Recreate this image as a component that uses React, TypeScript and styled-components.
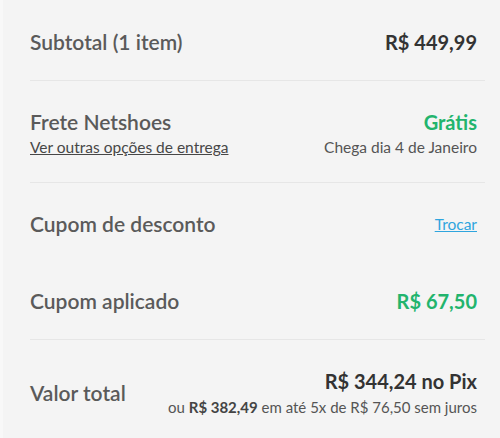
import React from "react";
import styled, { createGlobalStyle } from "styled-components";

const Global = createGlobalStyle`
  html, body { margin: 0; padding: 0; background: #f4f4f4; }
  body { font-family: "Lato", "Noto Sans", sans-serif; -webkit-font-smoothing: antialiased; }
`;

const Card = styled.div`
  width: 500px;
  height: 438px;
  box-sizing: border-box;
  background: #f4f4f4;
  border-left: 3px solid #f8f8f8;
  padding: 0 15px 0 27px;
`;

const Section = styled.section<{ $pt: number; $pb: number; $gap?: number; $last?: boolean }>`
  display: flex;
  flex-direction: column;
  gap: ${(p) => p.$gap ?? 0}px;
  padding: ${(p) => p.$pt}px 8px ${(p) => p.$pb}px 0;
  border-bottom: ${(p) => (p.$last ? "none" : "1px solid #e6e6e6")};
`;

const Row = styled.div`
  display: flex;
  justify-content: space-between;
  align-items: center;
`;

const Col = styled.div<{ $end?: boolean; $gap?: number }>`
  display: flex;
  flex-direction: column;
  align-items: ${(p) => (p.$end ? "flex-end" : "flex-start")};
  gap: ${(p) => p.$gap ?? 0}px;
`;

const Label = styled.span`
  font-size: 21px;
  line-height: 24px;
  font-weight: 600;
  color: #5a5a5a;
`;

const Price = styled.span<{ $green?: boolean }>`
  font-size: 20px;
  line-height: 24px;
  font-weight: 700;
  color: ${(p) => (p.$green ? "#22b46d" : "#333333")};
`;

const SmallLink = styled.a`
  font-size: 15.5px;
  line-height: 18px;
  color: #474747;
  text-decoration: underline;
  cursor: pointer;
`;

const SmallText = styled.span`
  font-size: 15.5px;
  line-height: 18px;
  color: #555555;
`;

const BlueLink = styled.a`
  font-size: 15.5px;
  line-height: 24px;
  color: #2fa5de;
  text-decoration: underline;
  cursor: pointer;
`;

const Installments = styled.span`
  font-size: 15px;
  line-height: 18px;
  color: #555555;
  b { font-weight: 700; color: #444444; }
`;

export default function App() {
  return (
    <>
      <Global />
      <Card>
        <Section $pt={30} $pb={26}>
          <Row>
            <Label>Subtotal (1 item)</Label>
            <Price>R$ 449,99</Price>
          </Row>
        </Section>
        <Section $pt={29} $pb={26}>
          <Row>
            <Col $gap={4}>
              <Label>Frete Netshoes</Label>
              <SmallLink>Ver outras opções de entrega</SmallLink>
            </Col>
            <Col $end $gap={4}>
              <Price $green>Grátis</Price>
              <SmallText>Chega dia 4 de Janeiro</SmallText>
            </Col>
          </Row>
        </Section>
        <Section $pt={29} $pb={26} $gap={53}>
          <Row>
            <Label>Cupom de desconto</Label>
            <BlueLink>Trocar</BlueLink>
          </Row>
          <Row>
            <Label>Cupom aplicado</Label>
            <Price $green>R$ 67,50</Price>
          </Row>
        </Section>
        <Section $pt={29} $pb={20} $last>
          <Row>
            <Label>Valor total</Label>
            <Col $end $gap={5}>
              <Price>R$ 344,24 no Pix</Price>
              <Installments>
                ou <b>R$ 382,49</b> em até 5x de R$ 76,50 sem juros
              </Installments>
            </Col>
          </Row>
        </Section>
      </Card>
    </>
  );
}
